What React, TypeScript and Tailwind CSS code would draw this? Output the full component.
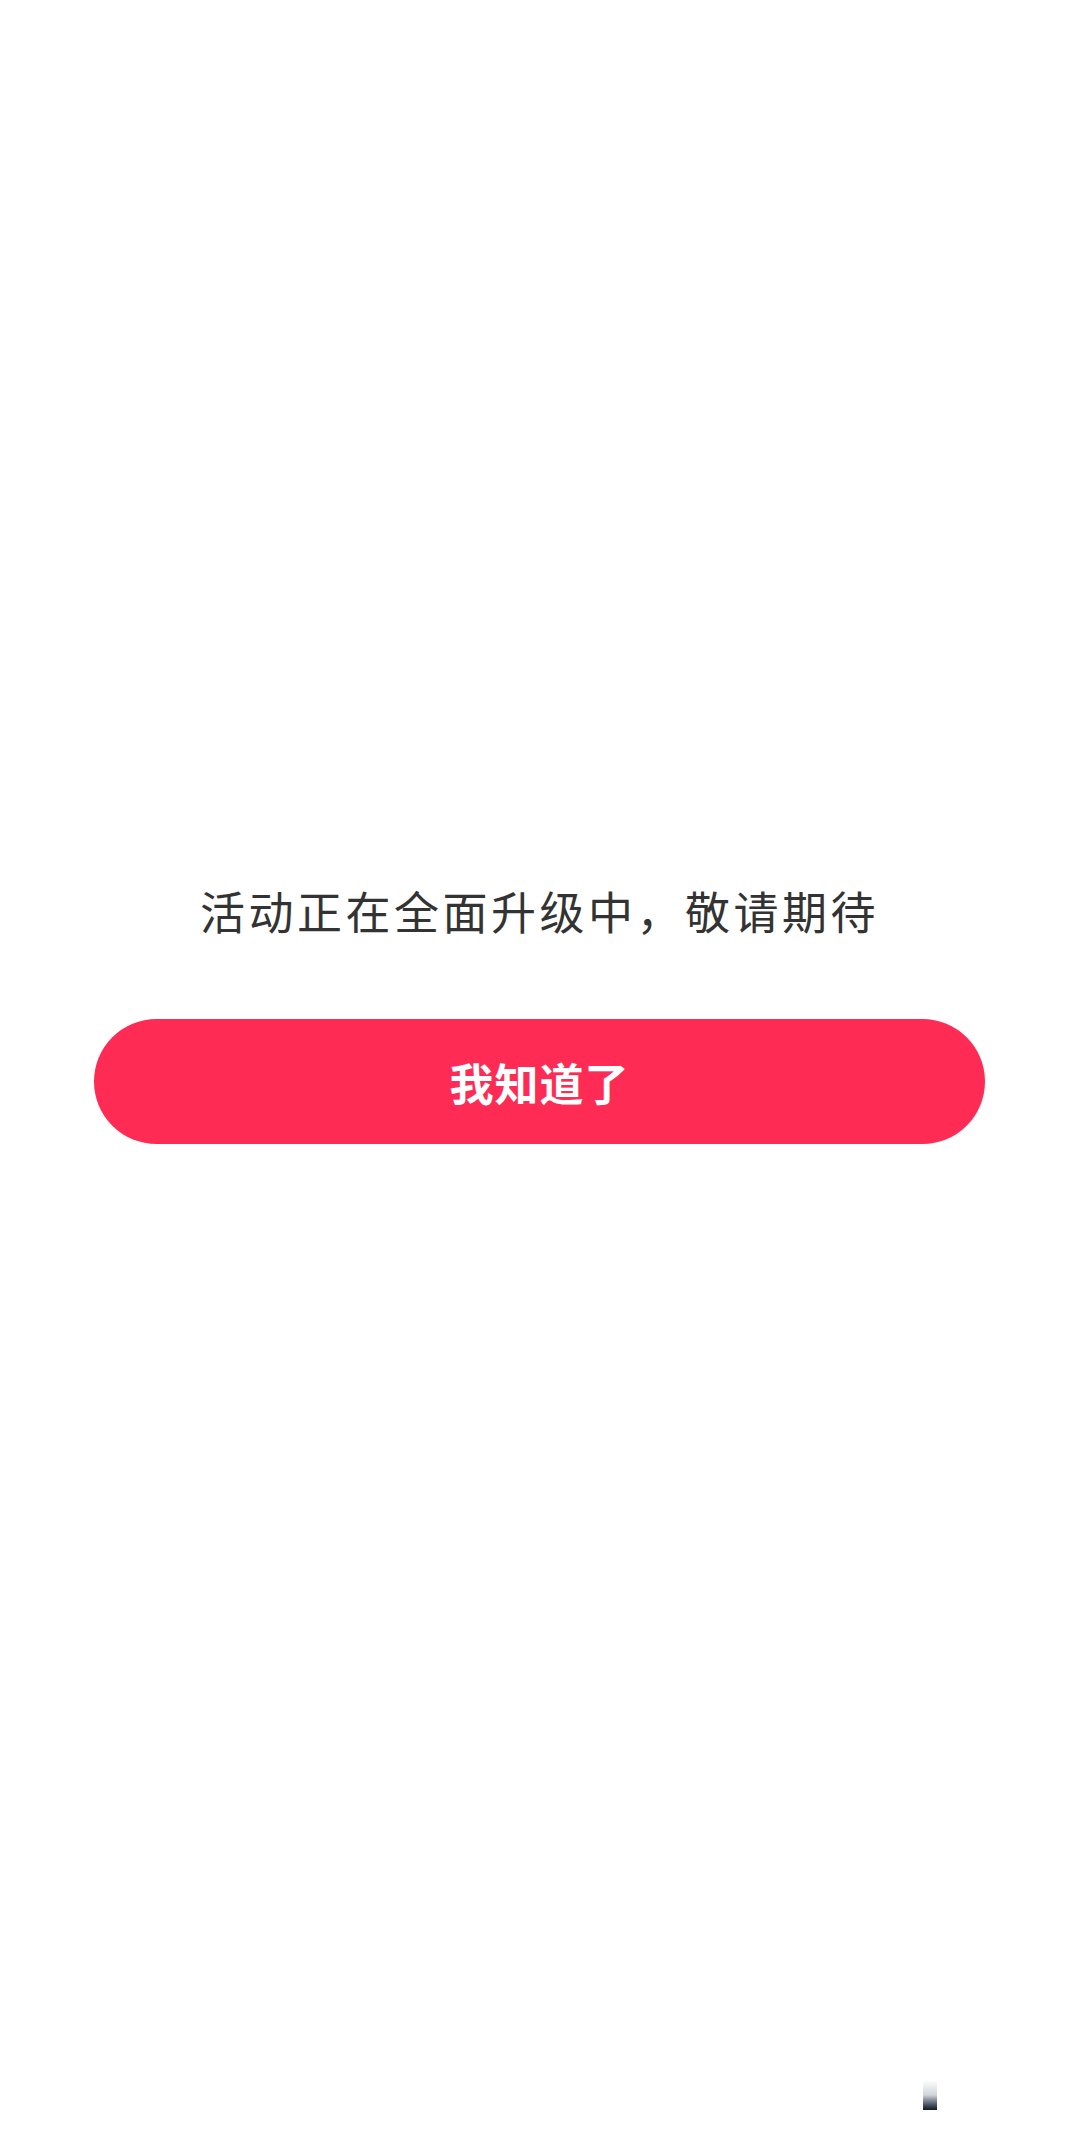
export default function App() {
    return (
        <div className="relative min-h-[2135px] bg-white" style={{ fontFamily: '"Noto Sans CJK SC", "Noto Sans", sans-serif' }}>
            <div className="flex flex-col items-center pt-[888px]">
                <p className="text-[45px] leading-[45px] tracking-[3.5px] text-[#333333] whitespace-nowrap">
                    活动正在全面升级中，敬请期待
                </p>
                <button className="mt-[86px] w-[891px] h-[125px] rounded-full bg-[#fe2c55] text-white text-[44px] font-bold tracking-[1px] flex items-center justify-center">
                    我知道了
                </button>
            </div>

            {/* scroll indicator */}
            <div className="absolute left-[923px] top-[2080px] w-[14px] h-[30px] bg-gradient-to-b from-white via-gray-300 to-gray-900 blur-[0.5px]" />
        </div>
    );
}
